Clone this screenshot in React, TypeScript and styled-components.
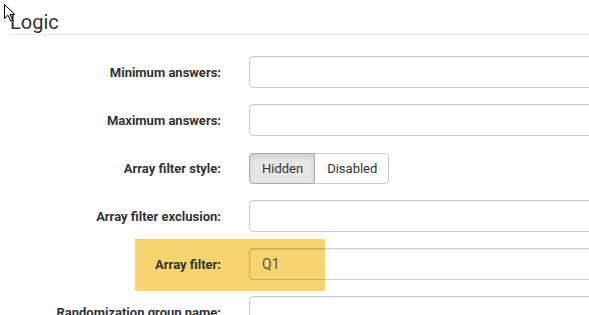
import styled, { createGlobalStyle } from "styled-components";

const GlobalStyle = createGlobalStyle`
    html, body {
        margin: 0;
        padding: 0;
        background: #fff;
        overflow: hidden;
    }
    body {
        font-family: Roboto, "Liberation Sans", Arial, sans-serif;
        color: #333;
    }
`;

type Field = {
    label: string;
    kind: "text" | "toggle";
    value?: string;
    highlight?: boolean;
};

const FIELDS: Field[] = [
    { label: "Minimum answers:", kind: "text" },
    { label: "Maximum answers:", kind: "text" },
    { label: "Array filter style:", kind: "toggle" },
    { label: "Array filter exclusion:", kind: "text" },
    { label: "Array filter:", kind: "text", value: "Q1", highlight: true },
    { label: "Randomization group name:", kind: "text" },
];

const Page = styled.div`
    position: relative;
    width: 589px;
    height: 315px;
    padding-left: 9px;
    box-sizing: border-box;
    overflow: hidden;
`;

const Title = styled.h3`
    margin: 11px 0 0;
    padding: 0 0 1px 1px;
    font-size: 20px;
    font-weight: 400;
    line-height: 22px;
    color: #333;
    border-bottom: 1px solid #e5e5e5;
`;

const Form = styled.div`
    display: flex;
    flex-direction: column;
    gap: 16px;
    margin-top: 21px;
`;

const Row = styled.div`
    position: relative;
    display: grid;
    grid-template-columns: 212px 400px;
    column-gap: 28px;
    align-items: center;
    min-height: 32px;
`;

const Highlight = styled.div`
    position: absolute;
    left: 126px;
    top: -9px;
    width: 190px;
    height: 52px;
    background: #f6d46f;
    z-index: 0;
`;

const Label = styled.label`
    position: relative;
    z-index: 1;
    text-align: right;
    font-size: 13px;
    font-weight: 700;
    color: #333;
    white-space: nowrap;
`;

const TextInput = styled.input<{ $clear?: boolean }>`
    position: relative;
    z-index: 1;
    box-sizing: border-box;
    width: 400px;
    height: 32px;
    padding: 6px 12px;
    font-family: inherit;
    font-size: 14px;
    color: #555;
    background: ${(p) => (p.$clear ? "transparent" : "#fff")};
    border: 1px solid ${(p) => (p.$clear ? "rgba(0,0,0,0.18)" : "#ccc")};
    border-radius: 4px;
    box-shadow: inset 0 1px 1px rgba(0, 0, 0, 0.075);
    outline: none;
`;

const BtnGroup = styled.div`
    display: flex;
    justify-self: start;
`;

const ToggleBtn = styled.button<{ $active?: boolean }>`
    height: 31px;
    padding: 0 11px 0 12px;
    font-family: inherit;
    font-size: 13px;
    color: #333;
    background: ${(p) => (p.$active ? "#e6e6e6" : "#fff")};
    border: 1px solid ${(p) => (p.$active ? "#adadad" : "#ccc")};
    box-shadow: ${(p) => (p.$active ? "inset 0 3px 5px rgba(0,0,0,0.1)" : "none")};
    cursor: pointer;

    &:first-child {
        border-radius: 4px 0 0 4px;
    }
    &:last-child {
        border-radius: 0 4px 4px 0;
        border-left: none;
    }
`;

const Cursor = styled.svg`
    position: absolute;
    left: 4px;
    top: 4px;
    pointer-events: none;
`;

export default function App() {
    return (
        <>
            <GlobalStyle />
            <Page>
                <Title>Logic</Title>
                <Form>
                    {FIELDS.map((f) => (
                        <Row key={f.label}>
                            {f.highlight && <Highlight />}
                            <Label>{f.label}</Label>
                            {f.kind === "toggle" ? (
                                <BtnGroup>
                                    <ToggleBtn $active>Hidden</ToggleBtn>
                                    <ToggleBtn>Disabled</ToggleBtn>
                                </BtnGroup>
                            ) : (
                                <TextInput
                                    $clear={f.highlight}
                                    defaultValue={f.value ?? ""}
                                />
                            )}
                        </Row>
                    ))}
                </Form>
                <Cursor width="13" height="18" viewBox="0 0 13 18">
                    <path
                        d="M0.5 0.5 L0.5 14.5 L4 11.2 L6.6 17 L8.6 16.1 L6 10.4 L10.8 10.4 Z"
                        fill="#fff"
                        stroke="#000"
                        strokeWidth="1"
                        strokeLinejoin="round"
                    />
                </Cursor>
            </Page>
        </>
    );
}
